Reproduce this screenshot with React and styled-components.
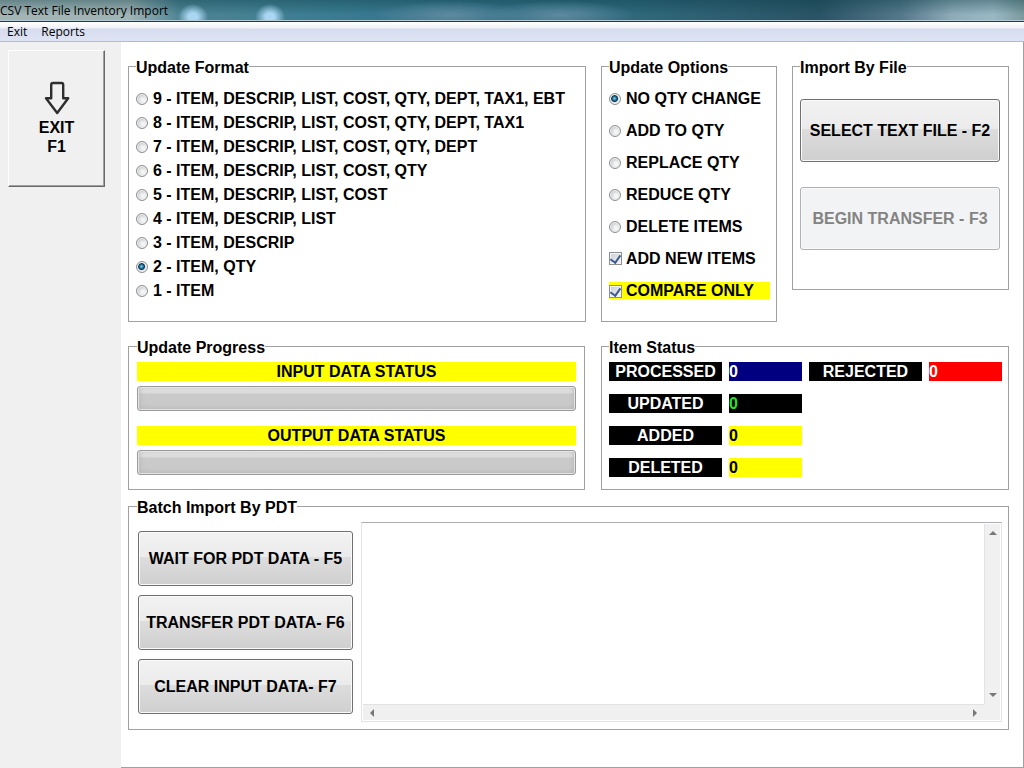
import React, { useState } from 'react';
import styled, { createGlobalStyle } from 'styled-components';

const formats = [
  '9 - ITEM, DESCRIP, LIST, COST, QTY, DEPT, TAX1, EBT',
  '8 - ITEM, DESCRIP, LIST, COST, QTY, DEPT, TAX1',
  '7 - ITEM, DESCRIP, LIST, COST, QTY, DEPT',
  '6 - ITEM, DESCRIP, LIST, COST, QTY',
  '5 - ITEM, DESCRIP, LIST, COST',
  '4 - ITEM, DESCRIP, LIST',
  '3 - ITEM, DESCRIP',
  '2 - ITEM, QTY',
  '1 - ITEM',
];

const qtyModes = [
  'NO QTY CHANGE',
  'ADD TO QTY',
  'REPLACE QTY',
  'REDUCE QTY',
  'DELETE ITEMS',
];

const counters = [
  { id: 'processed', label: 'PROCESSED', bg: '#000080', color: '#fff' },
  { id: 'rejected', label: 'REJECTED', bg: '#f00', color: '#fff' },
  { id: 'updated', label: 'UPDATED', bg: '#000', color: '#2be02b', newRow: true },
  { id: 'added', label: 'ADDED', bg: '#ff0', color: '#000', newRow: true },
  { id: 'deleted', label: 'DELETED', bg: '#ff0', color: '#000', newRow: true },
];

const Arrow = ({ points }) => (
  <svg width="8" height="8" viewBox="0 0 8 8">
    <polygon points={points} fill="#777" />
  </svg>
);

const App = () => {
  const [format, setFormat] = useState(formats[7]);
  const [mode, setMode] = useState(qtyModes[0]);
  const [addNew, setAddNew] = useState(true);
  const [compare, setCompare] = useState(true);

  return (
    <>
      <GlobalStyle />
      <Window>
        <TitleBar>
          <Title>CSV Text File Inventory Import</Title>
        </TitleBar>
        <MenuBar>
          <MenuItem type="button">Exit</MenuItem>
          <MenuItem type="button">Reports</MenuItem>
        </MenuBar>
        <Body>
          <Sidebar>
            <ExitButton type="button">
              <svg width="26" height="34" viewBox="0 0 26 34" fill="none" stroke="#2e2e2e" strokeWidth="2.4" strokeLinejoin="round">
                <path d="M9 2h8.500q1.700 0 1.700 1.700V17.200h5L13.200 32 2 17.200h5.200V3.700Q7.200 2 9 2z" />
              </svg>
              <span>EXIT</span>
              <span>F1</span>
            </ExitButton>
          </Sidebar>

          <Main>
            <TopRow>
              <Group $pad="9px 7px 19px">
                <Legend>Update Format</Legend>
                {formats.map(f => (
                  <Choice key={f} $height="24px">
                    <Radio name="format" checked={format === f} onChange={() => setFormat(f)} />
                    {f}
                  </Choice>
                ))}
              </Group>

              <Group $pad="5px 6px 15px 7px">
                <Legend>Update Options</Legend>
                {qtyModes.map(m => (
                  <Choice key={m} $height="32px">
                    <Radio name="mode" checked={mode === m} onChange={() => setMode(m)} />
                    {m}
                  </Choice>
                ))}
                <Choice $height="32px">
                  <Check checked={addNew} onChange={() => setAddNew(!addNew)} />
                  ADD NEW ITEMS
                </Choice>
                <Highlight $height="17px">
                  <Check checked={compare} onChange={() => setCompare(!compare)} />
                  COMPARE ONLY
                </Highlight>
              </Group>

              <Group $pad="22px 8px 39px 7px">
                <Legend>Import By File</Legend>
                <ButtonStack $gap="25px">
                  <Button type="button" $height="63px">SELECT TEXT FILE - F2</Button>
                  <Button type="button" $height="63px" disabled>BEGIN TRANSFER - F3</Button>
                </ButtonStack>
              </Group>
            </TopRow>

            <MiddleRow>
              <Group $pad="5px 8px 14px">
                <Legend>Update Progress</Legend>
                <ProgressList>
                  <Banner htmlFor="input-status">INPUT DATA STATUS</Banner>
                  <Progress id="input-status" value="0" max="100" />
                  <Banner htmlFor="output-status">OUTPUT DATA STATUS</Banner>
                  <Progress id="output-status" value="0" max="100" />
                </ProgressList>
              </Group>

              <Group $pad="5px 6px 12px 7px">
                <Legend>Item Status</Legend>
                <Counters>
                  {counters.map(c => (
                    <React.Fragment key={c.id}>
                      <CounterLabel htmlFor={c.id} $newRow={c.newRow}>{c.label}</CounterLabel>
                      <CounterValue id={c.id} $bg={c.bg} $color={c.color}>0</CounterValue>
                    </React.Fragment>
                  ))}
                </Counters>
              </Group>
            </MiddleRow>

            <Group $pad="5px 6px 7px 8px">
              <Legend>Batch Import By PDT</Legend>
              <Batch>
                <BatchButtons $gap="9px">
                  <Button type="button" $height="55px">WAIT FOR PDT DATA - F5</Button>
                  <Button type="button" $height="55px">TRANSFER PDT DATA- F6</Button>
                  <Button type="button" $height="55px">CLEAR INPUT DATA- F7</Button>
                </BatchButtons>
                <LogBox>
                  <Log aria-label="PDT data" wrap="off" />
                  <ScrollV>
                    <Arrow points="4,2 8,6 0,6" />
                    <Arrow points="0,2 8,2 4,6" />
                  </ScrollV>
                  <ScrollH>
                    <Arrow points="6,0 6,8 2,4" />
                    <Arrow points="2,0 6,4 2,8" />
                  </ScrollH>
                </LogBox>
              </Batch>
            </Group>
          </Main>
        </Body>
      </Window>
    </>
  );
};

export default App;

const GlobalStyle = createGlobalStyle`
  * {
    box-sizing: border-box;
  }
  body {
    margin: 0;
    background: #fff;
    color: #000;
    font: bold 16px/19px "Liberation Sans", Arial, sans-serif;
  }
  button, textarea {
    font: inherit;
    color: inherit;
  }
`;

const Window = styled.div`
  display: flex;
  flex-direction: column;
  min-height: 100vh;
`;

const TitleBar = styled.header`
  height: 22px;
  border-bottom: 1px solid #24384a;
  box-shadow: inset 0 -1px #b4cbd6;
  background:
    radial-gradient(ellipse 15px 13px at 193px 17px, #a9d6f2 30%, transparent),
    radial-gradient(ellipse 15px 13px at 270px 17px, #a9d6f2 30%, transparent),
    radial-gradient(ellipse 75px 14px at 450px 15px, #5d8aa0, transparent),
    radial-gradient(ellipse 75px 14px at 560px 15px, #5d8aa0, transparent),
    linear-gradient(rgba(10, 60, 70, 0.4), transparent 70%),
    linear-gradient(90deg, #a3b5b5 0, #a0b4b5 130px, #4d8494 180px, #3a7c92 330px, #35728a 45%, #2f687c 62%, #2a5365 80%, #54788a 88%, #8eabb9 93%, #9ab8c4 97%, #7b9a9c 100%);
`;

const Title = styled.h1`
  margin: 0;
  font: 12px/22px "Open Sans", sans-serif;
`;

const MenuBar = styled.nav`
  display: flex;
  height: 20px;
  border-bottom: 1px solid #b6bacd;
  background: linear-gradient(#fff, #eef1f6 6px, #d5dcee 7px, #dfe4f3);
`;

const MenuItem = styled.button`
  padding: 0 7px;
  border: 0;
  background: none;
  font: 12px/18px "Open Sans", sans-serif;
`;

const Body = styled.div`
  display: flex;
  flex: 1;
`;

const Sidebar = styled.aside`
  flex: none;
  width: 121px;
  padding: 8px;
  background: #f0f0f0;
`;

const ExitButton = styled.button`
  display: flex;
  flex-direction: column;
  align-items: center;
  justify-content: center;
  width: 97px;
  height: 137px;
  padding: 0;
  border: 1px solid;
  border-color: #fff #696969 #696969 #fff;
  box-shadow: inset -1px -1px #a0a0a0;
  background: #f0f0f0;

  svg {
    margin-bottom: 3px;
  }
`;

const Main = styled.main`
  flex: 1;
  min-width: 0;
  padding: 14px 14px 15px 7px;
  border: solid #a0a0a0;
  border-width: 0 1px 1px 0;
`;

const TopRow = styled.div`
  display: grid;
  grid-template-columns: minmax(0, 1fr) 176px 217px;
  align-items: start;
  gap: 15px;
  margin-bottom: 14px;
`;

const MiddleRow = styled.div`
  display: grid;
  grid-template-columns: minmax(0, 1fr) 408px;
  align-items: start;
  gap: 16px;
  margin-bottom: 6px;
`;

const Group = styled.fieldset`
  min-width: 0;
  margin: 0;
  padding: ${props => props.$pad};
  border: 1px solid #a0a0a0;
`;

const Legend = styled.legend`
  padding: 2px 0 0;
`;

const Choice = styled.label`
  display: flex;
  align-items: center;
  gap: 5px;
  height: ${props => props.$height};
  white-space: nowrap;
`;

const Highlight = styled(Choice)`
  margin: 8px 0 7px;
  background: #ff0;
`;

const Radio = styled.input.attrs({ type: 'radio' })`
  appearance: none;
  flex: none;
  width: 12px;
  height: 12px;
  margin: 2px 0 0;
  border: 1px solid #8e8f8f;
  border-radius: 50%;
  background: radial-gradient(circle at 60% 60%, #f4f4f4 20%, #c4c8cc 70%);
  box-shadow: inset 0 0 0 1px #f4f4f4;

  &:checked {
    background: radial-gradient(circle at 45% 45%, #8fd4ee 0, #1a6a94 2px, #0e3450 3px, #dde3e8 4px);
  }
`;

const Check = styled.input.attrs({ type: 'checkbox' })`
  appearance: none;
  flex: none;
  display: grid;
  place-items: center;
  width: 13px;
  height: 13px;
  margin: 1px -1px 0 0;
  border: 1px solid #8e8f8f;
  background: linear-gradient(135deg, #c9ced4, #f6f6f6);
  box-shadow: inset 0 0 0 1px #f4f4f4;

  &:checked::after {
    content: '';
    width: 5px;
    height: 8px;
    margin-bottom: 2px;
    border: solid #3c5a94;
    border-width: 0 2px 2px 0;
    transform: rotate(35deg);
  }
`;

const ButtonStack = styled.div`
  display: flex;
  flex-direction: column;
  gap: ${props => props.$gap};
`;

const Button = styled.button`
  height: ${props => props.$height};
  padding: 0;
  border: 1px solid #707070;
  border-radius: 3px;
  box-shadow: inset 0 0 0 1px #fafafa;
  background: linear-gradient(#f2f2f2, #ebebeb 47%, #dddddd 47%, #cfcfcf);
  white-space: nowrap;

  &:disabled {
    border-color: #adb2b5;
    background: #f2f3f4;
    color: #838383;
  }
`;

const ProgressList = styled.div`
  display: flex;
  flex-direction: column;
`;

const Banner = styled.label`
  background: #ff0;
  text-align: center;
  line-height: 19px;
`;

const Progress = styled.progress`
  appearance: none;
  width: 100%;
  height: 25px;
  margin: 5px 0 0;
  border: 1px solid #9a9a9a;
  border-radius: 3px;
  box-shadow: inset 0 0 0 1px #e4e4e4, inset 0 0 6px #aaa;
  background: linear-gradient(#f2f2f2, #dcdcdc 6px, #cacaca 7px, #cacaca);

  & + label {
    margin-top: 15px;
  }
  &::-webkit-progress-bar {
    background: none;
  }
`;

const Counters = styled.div`
  display: grid;
  grid-template-columns: 113px 73px 113px 73px;
  gap: 13px 7px;
`;

const CounterLabel = styled.label`
  grid-column-start: ${props => (props.$newRow ? 1 : 'auto')};
  background: #000;
  color: #fff;
  text-align: center;
`;

const CounterValue = styled.output`
  background: ${props => props.$bg};
  color: ${props => props.$color};
`;

const Batch = styled.div`
  display: flex;
  gap: 8px;
`;

const BatchButtons = styled(ButtonStack)`
  flex: none;
  width: 216px;
  padding: 9px 0 0 1px;
`;

const LogBox = styled.div`
  display: grid;
  flex: 1;
  grid-template-columns: minmax(0, 1fr) 16px;
  grid-template-rows: 1fr 16px;
  height: 200px;
  padding: 1px;
  border: 1px solid #e3e3ea;
  border-top-color: #abadb3;
  background: linear-gradient(#f0f0f0, #f0f0f0) content-box;
`;

const Log = styled.textarea`
  width: 100%;
  height: 100%;
  padding: 2px;
  border: 0;
  outline: 0;
  resize: none;
  overflow: hidden;
  background: #fff;
`;

const ScrollV = styled.div`
  display: flex;
  flex-direction: column;
  align-items: center;
  justify-content: space-between;
  padding: 5px 0;
  border-left: 1px solid #e3e3e3;
`;

const ScrollH = styled.div`
  display: flex;
  align-items: center;
  justify-content: space-between;
  padding: 0 5px;
  border-top: 1px solid #e3e3e3;
`;
